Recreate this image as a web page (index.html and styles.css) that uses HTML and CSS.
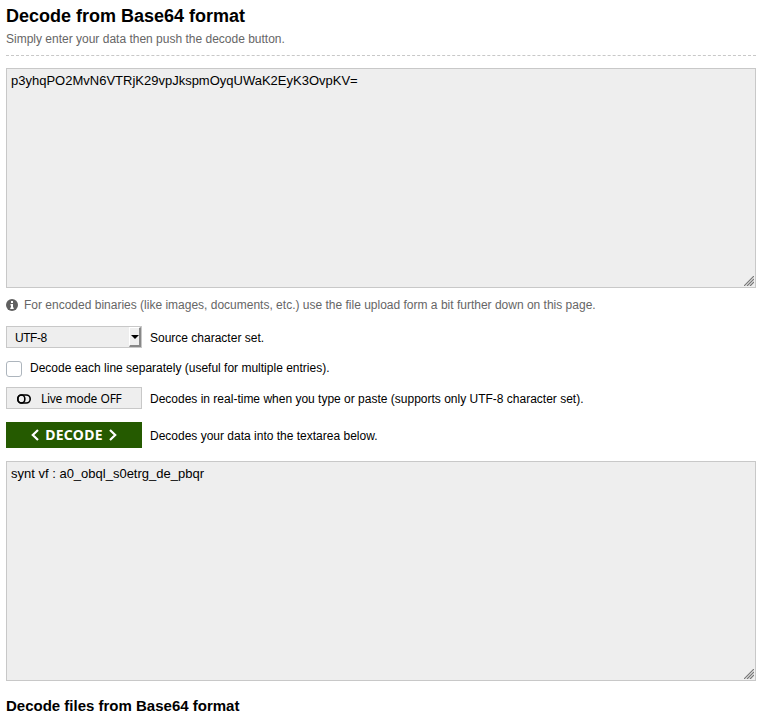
FILE: index.html
```html
<!DOCTYPE html>
<html lang="en">
<head>
<meta charset="utf-8">
<title>Decode from Base64 format</title>
<link rel="stylesheet" href="styles.css">
</head>
<body>
<main>
  <header>
    <h1>Decode from Base64 format</h1>
    <p class="muted">Simply enter your data then push the decode button.</p>
    <div class="rule"></div>
  </header>
  <section class="box">
    <span>p3yhqPO2MvN6VTRjK29vpJkspmOyqUWaK2EyK3OvpKV=</span>
    <svg class="grip" width="10" height="10" viewBox="0 0 10 10" aria-hidden="true"><path d="M0 10L10 0M3 10L10 3M6 10L10 6"/></svg>
  </section>
  <p class="muted note">
    <svg width="12" height="12" viewBox="0 0 12 12" aria-hidden="true"><circle cx="6" cy="6" r="6" fill="#606060"/><path d="M5 2h2v2H5zM4.500 5H7v3.500h.7V10H4.300V8.500H5v-2h-.5z" fill="#fff"/></svg>
    <span>For encoded binaries (like images, documents, etc.) use the file upload form a bit further down on this page.</span>
  </p>
  <div class="row charset">
    <div class="control select"><span>UTF-8</span><i class="arrow"></i></div>
    <span class="label">Source character set.</span>
  </div>
  <label class="row lines"><i class="check"></i><span>Decode each line separately (useful for multiple entries).</span></label>
  <div class="row live">
    <div class="control toggle">
      <svg width="14" height="10" viewBox="0 0 14 10" fill="none" stroke="#000" stroke-width="1.6" aria-hidden="true"><rect x=".8" y="1" width="12.4" height="8" rx="4"/><rect x=".8" y="1" width="7" height="8" rx="3.5"/></svg>
      <span>Live mode OFF</span>
    </div>
    <span class="label">Decodes in real-time when you type or paste (supports only UTF-8 character set).</span>
  </div>
  <div class="row decode">
    <div class="submit">
      <svg width="8" height="12" viewBox="0 0 8 12" aria-hidden="true"><path d="M7 1L1.800 6L7 11"/></svg>
      <span>DECODE</span>
      <svg width="8" height="12" viewBox="0 0 8 12" aria-hidden="true"><path d="M1 1L6.200 6L1 11"/></svg>
    </div>
    <span class="label">Decodes your data into the textarea below.</span>
  </div>
  <section class="box">
    <span>synt vf : a0_obql_s0etrg_de_pbqr</span>
    <svg class="grip" width="10" height="10" viewBox="0 0 10 10" aria-hidden="true"><path d="M0 10L10 0M3 10L10 3M6 10L10 6"/></svg>
  </section>
  <h2>Decode files from Base64 format</h2>
</main>
</body>
</html>
```
FILE: styles.css
```css
* { box-sizing: border-box; }
body { margin: 0; background: #fff; color: #000; font: 12px/16px "Liberation Sans", Arial, sans-serif; }
main { width: 750px; margin-left: 6px; padding-top: 5px; }
h1 { margin: 0; font-size: 18px; line-height: 22px; }
h2 { margin: 16px 0 0; font-size: 15px; line-height: 18px; }
p { margin: 0; }
.muted { color: #666; }
header { height: 63px; }
header .muted { margin-top: 4px; }
.rule { margin-top: 8px; border-top: 1px dashed #c8c8c8; }
.box { position: relative; height: 220px; padding: 4px; border: 1px solid #c8c8c8; background: #eee; font-size: 13px; line-height: 15px; }
.grip { position: absolute; right: 1px; bottom: 1px; fill: none; stroke: #777; stroke-width: 1.2; }
.note { display: flex; align-items: center; gap: 6px; height: 16px; margin-top: 9px; }
.row { display: flex; align-items: center; gap: 8px; }
.label { padding-top: 2px; }
.charset { height: 22px; margin-top: 13px; }
.lines { height: 16px; margin-top: 13px; }
.lines span { position: relative; top: -1px; }
.live { height: 22px; margin-top: 10px; }
.decode { height: 26px; margin: 13px 0; }
.control { display: flex; align-items: center; width: 136px; height: 22px; border: 1px solid #c8c8c8; background: #eee; }
.select { justify-content: space-between; padding-left: 8px; }
.select span { padding-top: 2px; letter-spacing: -.45px; }
.arrow { display: flex; align-items: center; justify-content: center; width: 12px; height: 20px; border: 1px solid; border-color: #fff #888 #888 #fff; border-right-width: 2px; border-bottom-width: 2px; background: #efefef; }
.arrow::before { content: ""; border: 4px solid transparent; border-top: 4px solid #000; border-bottom: 0; }
.check { width: 16px; height: 16px; border: 1px solid #adb5bd; border-radius: 3px; background: #fff; }
.toggle { gap: 10px; padding: 1px 0 0 10px; font-family: "Noto Sans", "Open Sans", sans-serif; letter-spacing: -.35px; word-spacing: 1px; }
.submit { display: flex; align-items: center; justify-content: center; gap: 6px; width: 136px; height: 26px; background: #255a00; color: #fff; font: bold 14px/20px "Noto Sans", "Open Sans", sans-serif; letter-spacing: .25px; }
.submit svg { fill: none; stroke: #fff; stroke-width: 2.2; }
```
